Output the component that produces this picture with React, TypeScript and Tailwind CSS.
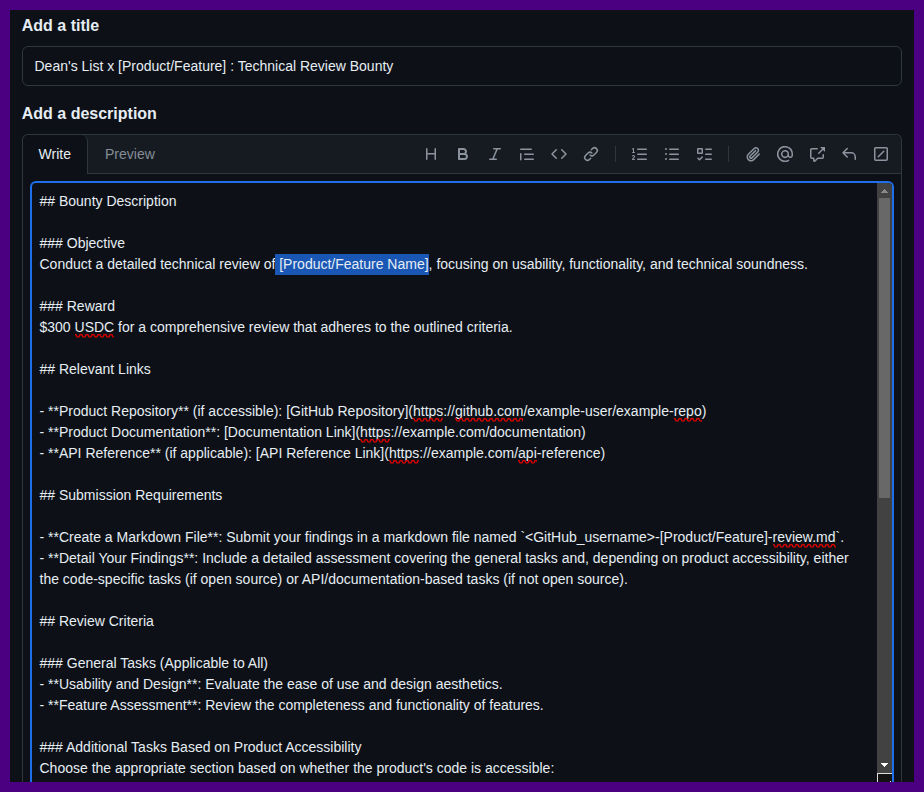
import React from 'react';

const ICONS = {
  heading:
    'M3.75 2a.75.75 0 0 1 .75.75V7h7V2.75a.75.75 0 0 1 1.5 0v10.5a.75.75 0 0 1-1.5 0V8.5h-7v4.75a.75.75 0 0 1-1.5 0V2.75A.75.75 0 0 1 3.75 2Z',
  bold: 'M4 2h4.5a3.501 3.501 0 0 1 2.852 5.53A3.499 3.499 0 0 1 9.5 14H4a1 1 0 0 1-1-1V3a1 1 0 0 1 1-1Zm1 7v3h4.5a1.5 1.5 0 0 0 0-3Zm3.5-2a1.5 1.5 0 0 0 0-3H5v3Z',
  italic:
    'M6 2.75A.75.75 0 0 1 6.75 2h6.5a.75.75 0 0 1 0 1.5h-2.505l-3.858 9H9.25a.75.75 0 0 1 0 1.5h-6.5a.75.75 0 0 1 0-1.5h2.505l3.858-9H6.75A.75.75 0 0 1 6 2.75Z',
  quote:
    'M1.75 2.5h10.5a.75.75 0 0 1 0 1.5H1.75a.75.75 0 0 1 0-1.5Zm4 5h8.5a.75.75 0 0 1 0 1.5h-8.5a.75.75 0 0 1 0-1.5Zm0 5h8.5a.75.75 0 0 1 0 1.5h-8.5a.75.75 0 0 1 0-1.5ZM2.5 7.75v6a.75.75 0 0 1-1.5 0v-6a.75.75 0 0 1 1.5 0Z',
  code: 'm11.28 3.22 4.25 4.25a.75.75 0 0 1 0 1.06l-4.25 4.25a.749.749 0 0 1-1.275-.326.749.749 0 0 1 .215-.734L13.94 8l-3.72-3.72a.749.749 0 0 1 .326-1.275.749.749 0 0 1 .734.215Zm-6.56 0a.751.751 0 0 1 1.042.018.751.751 0 0 1 .018 1.042L2.06 8l3.72 3.72a.749.749 0 0 1-.326 1.275.749.749 0 0 1-.734-.215L.47 8.53a.75.75 0 0 1 0-1.06Z',
  link: 'm7.775 3.275 1.25-1.25a3.5 3.5 0 1 1 4.95 4.95l-2.5 2.5a3.5 3.5 0 0 1-4.95 0 .751.751 0 0 1 .018-1.042.751.751 0 0 1 1.042-.018 1.998 1.998 0 0 0 2.83 0l2.5-2.5a2.002 2.002 0 0 0-2.83-2.83l-1.25 1.25a.751.751 0 0 1-1.042-.018.751.751 0 0 1-.018-1.042Zm-4.69 9.64a1.998 1.998 0 0 0 2.83 0l1.25-1.25a.751.751 0 0 1 1.042.018.751.751 0 0 1 .018 1.042l-1.25 1.25a3.5 3.5 0 1 1-4.95-4.95l2.5-2.5a3.5 3.5 0 0 1 4.95 0 .751.751 0 0 1-.018 1.042.751.751 0 0 1-1.042.018 1.998 1.998 0 0 0-2.83 0l-2.5 2.5a1.998 1.998 0 0 0 0 2.83Z',
  ordered:
    'M5 3.25a.75.75 0 0 1 .75-.75h8.5a.75.75 0 0 1 0 1.5h-8.5A.75.75 0 0 1 5 3.25Zm0 5a.75.75 0 0 1 .75-.75h8.5a.75.75 0 0 1 0 1.5h-8.5A.75.75 0 0 1 5 8.25Zm0 5a.75.75 0 0 1 .75-.75h8.5a.75.75 0 0 1 0 1.5h-8.5a.75.75 0 0 1-.75-.75ZM.924 10.32a.5.5 0 0 1-.851-.525l.001-.001.001-.002.002-.004.007-.011c.097-.144.215-.273.348-.384.228-.19.588-.392 1.068-.392.468 0 .858.181 1.126.484.259.294.377.673.377 1.038 0 .987-.686 1.495-1.156 1.845l-.047.035c-.303.225-.522.4-.654.597h1.357a.5.5 0 0 1 0 1H.5a.5.5 0 0 1-.5-.5c0-1.005.692-1.52 1.167-1.875l.035-.025c.531-.396.8-.625.8-1.078a.57.57 0 0 0-.128-.376C1.806 10.068 1.695 10 1.5 10a.658.658 0 0 0-.429.163.835.835 0 0 0-.144.153ZM2.003 2.5V6h.503a.5.5 0 0 1 0 1H.5a.5.5 0 0 1 0-1h.503V3.308l-.28.14a.5.5 0 0 1-.446-.895l1.003-.5a.5.5 0 0 1 .723.447Z',
  unordered:
    'M5.75 2.5h8.5a.75.75 0 0 1 0 1.5h-8.5a.75.75 0 0 1 0-1.5Zm0 5h8.5a.75.75 0 0 1 0 1.5h-8.5a.75.75 0 0 1 0-1.5Zm0 5h8.5a.75.75 0 0 1 0 1.5h-8.5a.75.75 0 0 1 0-1.5ZM2 14a1 1 0 1 1 0-2 1 1 0 0 1 0 2Zm1-6a1 1 0 1 1-2 0 1 1 0 0 1 2 0ZM2 4a1 1 0 1 1 0-2 1 1 0 0 1 0 2Z',
  tasklist:
    'M2 2h4a1 1 0 0 1 1 1v4a1 1 0 0 1-1 1H2a1 1 0 0 1-1-1V3a1 1 0 0 1 1-1Zm4.655 8.595a.75.75 0 0 1 0 1.06L4.03 14.28a.75.75 0 0 1-1.06 0l-1.5-1.5a.749.749 0 0 1 .326-1.275.749.749 0 0 1 .734.215l.97.97 2.095-2.095a.75.75 0 0 1 1.06 0ZM9.75 2.5h5.5a.75.75 0 0 1 0 1.5h-5.5a.75.75 0 0 1 0-1.5Zm0 5h5.5a.75.75 0 0 1 0 1.5h-5.5a.75.75 0 0 1 0-1.5Zm0 5h5.5a.75.75 0 0 1 0 1.5h-5.5a.75.75 0 0 1 0-1.5Zm-7.25-9v3h3v-3Z',
  paperclip:
    'M12.212 3.02a1.753 1.753 0 0 0-2.478.003l-5.83 5.83a3.007 3.007 0 0 0-.88 2.127c0 .795.315 1.551.88 2.116.567.567 1.333.89 2.126.89.79 0 1.548-.321 2.116-.89l5.48-5.48a.75.75 0 0 1 1.061 1.06l-5.48 5.48a4.492 4.492 0 0 1-3.177 1.33c-1.2 0-2.345-.487-3.187-1.33a4.483 4.483 0 0 1-1.32-3.177c0-1.195.475-2.341 1.32-3.186l5.83-5.83a3.25 3.25 0 0 1 5.553 2.297c0 .863-.343 1.691-.953 2.301L7.439 12.39c-.375.377-.884.59-1.416.593a1.998 1.998 0 0 1-1.412-.593 1.992 1.992 0 0 1 0-2.828l5.48-5.48a.751.751 0 0 1 1.042.018.751.751 0 0 1 .018 1.042l-5.48 5.48a.492.492 0 0 0 0 .707.499.499 0 0 0 .352.154.51.51 0 0 0 .356-.154l5.833-5.827a1.755 1.755 0 0 0 0-2.481Z',
  mention:
    'M4.75 2.37a6.501 6.501 0 0 0 6.5 11.26.75.75 0 0 1 .75 1.298A7.999 7.999 0 0 1 .989 4.148 8 8 0 0 1 16 7.75v1.5a2.75 2.75 0 0 1-5.072 1.475 3.999 3.999 0 0 1-6.65-4.19A4 4 0 0 1 12 8v1.25a1.25 1.25 0 0 0 2.5 0V7.867a6.5 6.5 0 0 0-9.75-5.496ZM10.5 8a2.5 2.5 0 1 0-5 0 2.5 2.5 0 0 0 5 0Z',
  crossReference:
    'M2.75 3.5a.25.25 0 0 0-.25.25v7.5c0 .138.112.25.25.25h2a.75.75 0 0 1 .75.75v2.19l2.72-2.72a.749.749 0 0 1 .53-.22h4.5a.25.25 0 0 0 .25-.25v-2.5a.75.75 0 0 1 1.5 0v2.5A1.75 1.75 0 0 1 13.25 13H9.06l-2.573 2.573A1.458 1.458 0 0 1 4 14.543V13H2.75A1.75 1.75 0 0 1 1 11.25v-7.5C1 2.784 1.784 2 2.75 2h5.5a.75.75 0 0 1 0 1.5ZM16 1.25v4.146a.25.25 0 0 1-.427.177L14.03 4.03l-3.75 3.75a.749.749 0 0 1-1.275-.326.749.749 0 0 1 .215-.734l3.75-3.75-1.543-1.543A.25.25 0 0 1 11.604 1h4.146a.25.25 0 0 1 .25.25Z',
  reply:
    'M6.78 1.97a.75.75 0 0 1 0 1.06L3.81 6h6.44A4.75 4.75 0 0 1 15 10.75v2.5a.75.75 0 0 1-1.5 0v-2.5a3.25 3.25 0 0 0-3.25-3.25H3.81l2.97 2.97a.749.749 0 0 1-.326 1.275.749.749 0 0 1-.734-.215L1.47 7.28a.75.75 0 0 1 0-1.06l4.25-4.25a.75.75 0 0 1 1.06 0Z',
  slash:
    'M13.25 1c.966 0 1.75.784 1.75 1.75v10.5A1.75 1.75 0 0 1 13.25 15H2.75A1.75 1.75 0 0 1 1 13.25V2.75C1 1.784 1.784 1 2.75 1ZM2.75 2.5a.25.25 0 0 0-.25.25v10.5c0 .138.112.25.25.25h10.5a.25.25 0 0 0 .25-.25V2.75a.25.25 0 0 0-.25-.25Zm8.53 3.28-5.5 5.5a.75.75 0 0 1-1.06-1.06l5.5-5.5a.75.75 0 1 1 1.06 1.06Z',
};

type IconName = keyof typeof ICONS;

const GROUPS: IconName[][] = [
  ['heading', 'bold', 'italic', 'quote', 'code', 'link'],
  ['ordered', 'unordered', 'tasklist'],
  ['paperclip', 'mention', 'crossReference', 'reply', 'slash'],
];

function Toolbar() {
  return (
    <div className="ml-auto flex h-[38px] items-center pr-1 text-[#8b949e]">
      {GROUPS.map((group, i) => (
        <React.Fragment key={i}>
          {i > 0 && <span className="mx-2 h-4 w-px bg-[#30363d]" />}
          {group.map((name) => (
            <button key={name} type="button" aria-label={name} className="px-2">
              <svg viewBox="0 0 16 16" className="block h-4 w-4 fill-current" fillRule="evenodd">
                <path d={ICONS[name]} />
              </svg>
            </button>
          ))}
        </React.Fragment>
      ))}
    </div>
  );
}

const SQUIGGLE = 'M0 1.5' + 'q1.5 0 1.5 1.3t1.5 1.3 1.5-1.3 1.5-1.3'.repeat(20);

// A word flagged by the spell checker
function Sp({ children }: { children: React.ReactNode }) {
  return (
    <span className="relative">
      {children}
      <svg className="absolute left-0 top-[14px] h-[5px] w-full overflow-hidden" aria-hidden="true">
        <path d={SQUIGGLE} className="fill-none stroke-[#d80000] stroke-[1.4]" />
      </svg>
    </span>
  );
}

const LINES: React.ReactNode[] = [
  '## Bounty Description',
  '',
  '### Objective',
  <>
    Conduct a detailed technical review of
    <span className="inline-block h-[21px] whitespace-pre bg-[#1a57b5] align-top"> [Product/Feature Name]</span>, focusing on usability,
    functionality, and technical soundness.
  </>,
  '',
  '### Reward',
  <>
    $300 <Sp>USDC</Sp> for a comprehensive review that adheres to the outlined criteria.
  </>,
  '',
  '## Relevant Links',
  '',
  <>
    - **Product Repository** (if accessible): [GitHub Repository](<Sp>https</Sp>://
    <Sp>github.com</Sp>/example-user/example-<Sp>repo</Sp>)
  </>,
  <>
    - **Product Documentation**: [Documentation Link](<Sp>https</Sp>://example.com/documentation)
  </>,
  <>
    - **API Reference** (if applicable): [API Reference Link](<Sp>https</Sp>://example.com/
    <Sp>api</Sp>-reference)
  </>,
  '',
  '## Submission Requirements',
  '',
  <>
    - **Create a Markdown File**: Submit your findings in a markdown file named
    {' `<GitHub_username>-[Product/Feature]-'}
    <Sp>review.md</Sp>`.
  </>,
  '- **Detail Your Findings**: Include a detailed assessment covering the general tasks and, depending on product accessibility, either',
  'the code-specific tasks (if open source) or API/documentation-based tasks (if not open source).',
  '',
  '## Review Criteria',
  '',
  '### General Tasks (Applicable to All)',
  '- **Usability and Design**: Evaluate the ease of use and design aesthetics.',
  '- **Feature Assessment**: Review the completeness and functionality of features.',
  '',
  '### Additional Tasks Based on Product Accessibility',
  "Choose the appropriate section based on whether the product's code is accessible:",
];

function Scrollbar() {
  return (
    <div className="flex w-[15px] shrink-0 flex-col items-center bg-[#424242]">
      <div className="flex h-[15px] items-center justify-center">
        <svg viewBox="0 0 7 4" className="mt-px h-1 w-[7px] fill-[#898989]" shapeRendering="crispEdges">
          <path d="M3 0h1v1h1v1h1v1h1v1H0V3h1V2h1V1h1Z" />
        </svg>
      </div>
      <div className="h-[300px] w-[11px] bg-[#686868]" />
      <div className="flex-1" />
      <div className="flex h-[17px] items-center justify-center">
        <svg viewBox="0 0 7 4" className="h-1 w-[7px] fill-white" shapeRendering="crispEdges">
          <path d="M0 0h7v1H6v1H5v1H4v1H3V3H2V2H1V1H0Z" />
        </svg>
      </div>
      <div className="flex h-[9px] w-full items-end justify-end border-l border-t border-[#dcdcdc] bg-[#121212]">
        <span className="mr-px h-px w-px bg-[#dcdcdc]" />
      </div>
    </div>
  );
}

export default function App() {
  return (
    <div className="h-[792px] w-[924px] overflow-hidden bg-[#4b0082] p-[10px] font-['Liberation_Sans',Arial,sans-serif] text-[14px] leading-[21px] text-[#e6edf3]">
      <main className="flex h-full flex-col overflow-hidden bg-[#0d1117] px-3 pt-1">
        <h2 className="-ml-[0.25px] text-base font-bold leading-6">Add a title</h2>
        <div className="mt-2 flex h-10 shrink-0 items-center rounded-md border border-[#30363d] px-[11.5px]">
          Dean's List x [Product/Feature] : Technical Review Bounty
        </div>
        <h2 className="-ml-[0.25px] mt-4 text-base font-bold leading-6">Add a description</h2>
        <section className="mt-2 flex min-h-0 flex-1 flex-col rounded-t-md border border-b-0 border-[#30363d]">
          <header className="flex h-[39px] shrink-0 rounded-t-md bg-[#161b22] shadow-[inset_0_-1px_0_#30363d]">
            <button className="h-[39px] w-[65px] rounded-t-md border-r border-[#30363d] bg-[#0d1117] pr-[0.5px]">
              Write
            </button>
            <button className="px-[17px] text-[#848d97]">Preview</button>
            <Toolbar />
          </header>
          <div className="flex min-h-0 flex-1 px-[7px] pt-[7px]">
            <div className="flex min-w-0 flex-1 overflow-hidden rounded-t-md border-2 border-b-0 border-[#1f6feb]">
              <div className="min-w-0 flex-1 pl-[7.5px] pt-2">
                {LINES.map((line, i) => (
                  <div key={i} className="h-[21px] whitespace-nowrap">
                    {line}
                  </div>
                ))}
              </div>
              <Scrollbar />
            </div>
          </div>
        </section>
      </main>
    </div>
  );
}
